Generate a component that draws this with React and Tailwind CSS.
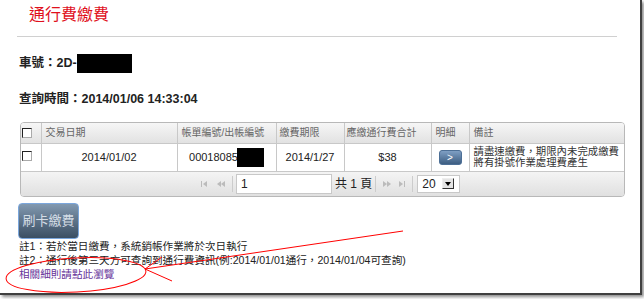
import React from "react";

const font = "font-['Liberation_Sans','Noto_Sans_CJK_TC',sans-serif]";

function Check() {
  return (
    <span className="inline-block w-[10px] h-[10px] bg-white border border-t-[#222] border-l-[#222] border-r-[#aaa] border-b-[#aaa]" />
  );
}

function PagerIcon({ type }) {
  return (
    <svg width="10" height="8" viewBox="0 0 10 8" className="text-[#bbb]">
      {type === "first" && (
        <g fill="currentColor">
          <rect x="1" y="1" width="1" height="6" />
          <path d="M3 4 L7 1 L7 7 Z" />
        </g>
      )}
      {type === "prev" && (
        <g fill="currentColor">
          <path d="M1 4 L5 1 L5 7 Z" />
          <path d="M5 4 L9 1 L9 7 Z" />
        </g>
      )}
      {type === "next" && (
        <g fill="currentColor">
          <path d="M1 1 L5 4 L1 7 Z" />
          <path d="M5 1 L9 4 L5 7 Z" />
        </g>
      )}
      {type === "last" && (
        <g fill="currentColor">
          <path d="M2 1 L6 4 L2 7 Z" />
          <rect x="7" y="1" width="1" height="6" />
        </g>
      )}
    </svg>
  );
}

export default function App() {
  return (
    <div className={`w-[644px] h-[299px] bg-white overflow-hidden ${font}`}>
      <div className="relative w-[642px] h-[295px] bg-white border-r-2 border-b-2 border-[#404040] shadow-[2px_2px_3px_rgba(0,0,0,0.45)]">
        <div className="pl-[17px] pr-[23px]">
          <div className="pt-[5px] pl-[12px] h-[25px] text-[16px] leading-[20px] text-[#e0101c]">
            通行費繳費
          </div>
          <div className="mt-[11px] h-px bg-[#d0d0d0]" />

          <div className="mt-[17px] h-[19px] flex items-center pl-[2px] text-[12.5px] font-bold text-[#222]">
            <span>車號：2D-</span>
            <span className="inline-block w-[55px] h-[19px] bg-black" />
          </div>

          <div className="mt-[17px] h-[19px] flex items-center pl-[2px] text-[12.5px] font-bold text-[#222]">
            查詢時間：2014/01/06 14:33:04
          </div>

          <div className="mt-[13px] ml-[3px] w-[605px] rounded-[4px] border border-[#b8b8b8] overflow-hidden">
            <table className="w-full table-fixed border-collapse">
              <colgroup>
                <col className="w-[20px]" />
                <col className="w-[136px]" />
                <col className="w-[99px]" />
                <col className="w-[68px]" />
                <col className="w-[87px]" />
                <col className="w-[38px]" />
                <col />
              </colgroup>
              <thead>
                <tr className="h-[20px] bg-gradient-to-b from-[#f6f6f6] to-[#e2e2e2] text-[10px] text-[#666] font-normal">
                  <th className="border-r border-[#c8c8c8] align-bottom pb-[1px] pl-[1px] text-left">
                    <Check />
                  </th>
                  <th className="border-r border-[#c8c8c8] text-left font-normal pl-[4px]">交易日期</th>
                  <th className="border-r border-[#c8c8c8] text-left font-normal pl-[4px]">帳單編號/出帳編號</th>
                  <th className="border-r border-[#c8c8c8] text-left font-normal pl-[3px]">繳費期限</th>
                  <th className="border-r border-[#c8c8c8] text-left font-normal pl-[2px]">應繳通行費合計</th>
                  <th className="border-r border-[#c8c8c8] text-left font-normal pl-[4px]">明細</th>
                  <th className="text-left font-normal pl-[4px]">備註</th>
                </tr>
              </thead>
              <tbody>
                <tr className="h-[28px] bg-white text-[11px] text-[#222] border-t border-b border-[#c8c8c8]">
                  <td className="border-r border-[#c8c8c8] align-top pt-[5px] pl-[1px]">
                    <Check />
                  </td>
                  <td className="border-r border-[#c8c8c8] text-center">2014/01/02</td>
                  <td className="border-r border-[#c8c8c8]">
                    <div className="flex items-center justify-center">
                      <span>00018085</span>
                      <span className="inline-block -ml-[1px] w-[27px] h-[19px] bg-black" />
                    </div>
                  </td>
                  <td className="border-r border-[#c8c8c8] text-center">2014/1/27</td>
                  <td className="border-r border-[#c8c8c8] text-center">$38</td>
                  <td className="border-r border-[#c8c8c8]">
                    <div className="flex justify-center">
                      <span className="w-[23px] h-[15px] rounded-[3px] border border-[#4d6f96] bg-gradient-to-b from-[#7f9fc4] to-[#3d5e82] text-white text-[10px] leading-[13px] text-center">
                        &gt;
                      </span>
                    </div>
                  </td>
                  <td className="pl-[4px] text-[10.4px] leading-[11px] text-[#333]">
                    請盡速繳費，期限內未完成繳費
                    <br />
                    將有掛號作業處理費產生
                  </td>
                </tr>
              </tbody>
            </table>
            <div className="h-[24px] bg-gradient-to-b from-[#f4f4f4] to-[#e0e0e0] flex items-center pl-[179px] text-[12px] text-[#222]">
              <PagerIcon type="first" />
              <span className="ml-[6px]">
                <PagerIcon type="prev" />
              </span>
              <span className="ml-[6px] w-px h-[16px] bg-[#ccc]" />
              <span className="ml-[3px] w-[96px] h-[20px] bg-white border border-[#c8c8c8] pl-[4px] leading-[18px]">1</span>
              <span className="ml-[3px]">共 1 頁</span>
              <span className="ml-[3px] w-px h-[16px] bg-[#ccc]" />
              <span className="ml-[6px]">
                <PagerIcon type="next" />
              </span>
              <span className="ml-[5px]">
                <PagerIcon type="last" />
              </span>
              <span className="ml-[5px] w-px h-[16px] bg-[#ccc]" />
              <span className="ml-[4px] w-[43px] h-[18px] bg-white border border-[#c8c8c8] flex items-center pl-[4px] text-[12px]">
                <span>20</span>
                <span className="ml-[6px] w-[12px] h-[11px] bg-[#e4e4e4] border border-t-[#eee] border-l-[#eee] border-r-[#333] border-b-[#333] flex items-center justify-center">
                  <svg width="6" height="4" viewBox="0 0 6 4">
                    <path d="M0 0 L6 0 L3 4 Z" fill="#000" />
                  </svg>
                </span>
              </span>
            </div>
          </div>

          <button className="mt-[6px] ml-[1px] w-[61px] h-[36px] rounded-[4px] border border-[#7aa6dc] bg-gradient-to-b from-[#8299b0] to-[#3b4f63] text-[13px] text-[#d4dde6]">
            刷卡繳費
          </button>

          <div className="pl-[2px] text-[10.6px] leading-[14px] text-[#222]">
            <div>註1：若於當日繳費，系統銷帳作業將於次日執行</div>
            <div>註2：通行後第三天方可查詢到通行費資訊(例:2014/01/01通行，2014/01/04可查詢)</div>
            <div className="text-[#663399]">相關細則請點此瀏覽</div>
          </div>
        </div>

        <svg className="absolute inset-0 pointer-events-none" width="642" height="295">
          <ellipse cx="76" cy="275" rx="70" ry="17" transform="rotate(-3 76 275)" fill="none" stroke="#f00" strokeWidth="1" />
          <line x1="145" y1="269" x2="403" y2="231" stroke="#f00" strokeWidth="1" />
          <line x1="145" y1="269" x2="162" y2="257" stroke="#f00" strokeWidth="1" />
          <line x1="145" y1="269" x2="172" y2="281" stroke="#f00" strokeWidth="1" />
        </svg>
      </div>
    </div>
  );
}
